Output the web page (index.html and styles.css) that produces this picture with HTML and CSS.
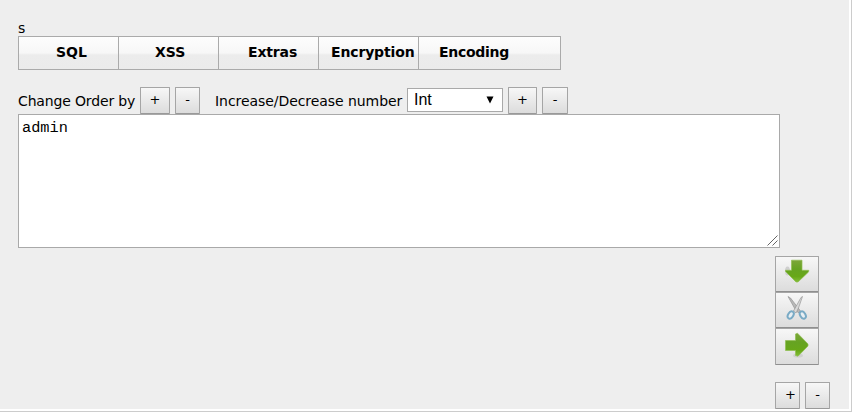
FILE: index.html
```html
<!DOCTYPE html>
<html lang="en">
<head>
<meta charset="utf-8">
<title>SQL tools</title>
<link rel="stylesheet" href="styles.css">
</head>
<body>
<main class="panel">
  <div class="caption">s</div>
  <nav class="menu">
    <a class="item sql"><span>SQL</span></a>
    <a class="item xss"><span>XSS</span></a>
    <a class="item extras"><span>Extras</span></a>
    <a class="item encryption"><span>Encryption</span></a>
    <a class="item encoding"><span>Encoding</span></a>
  </nav>
  <div class="controls">
    <span class="label order">Change Order by</span>
    <button class="btn wide">+</button>
    <button class="btn minus">-</button>
    <span class="label number">Increase/Decrease number</span>
    <div class="select"><span>Int</span><svg width="8" height="8" viewBox="0 0 8 8"><path d="M0.5 0.5H7.5L4 7.5Z"/></svg></div>
    <button class="btn plus">+</button>
    <button class="btn last">-</button>
  </div>
  <div class="editor">
    <span class="value">admin</span>
    <svg class="grip" width="11" height="11" viewBox="0 0 11 11"><path d="M0.5 10.5L10.5 0.5M5.5 10.5L10.5 5.5"/></svg>
  </div>
  <div class="actions">
    <button class="action">
      <svg width="26" height="26" viewBox="0 0 26 26">
        <defs><linearGradient id="green" x1="0" y1="0" x2="0" y2="1"><stop offset="0" stop-color="#7da63a"/><stop offset=".4" stop-color="#66a322"/><stop offset=".75" stop-color="#68a818"/><stop offset="1" stop-color="#83bd38"/></linearGradient></defs>
        <ellipse cx="3.5" cy="12" rx="2.5" ry="4.5" fill="#cfcfcf"/>
        <path d="M7.5 1.2H18V11.3L24.8 11.3L24.5 13L14 23H12L1.5 12.5V11.3H7.5Z" fill="url(#green)" stroke="#8fbf52" stroke-width=".7"/>
      </svg>
    </button>
    <button class="action">
      <svg width="26" height="26" viewBox="0 0 26 26">
        <path d="M4 1.5L6.5 3L16.5 16L14.5 18L11 14Z" fill="#b8b8b8" stroke="#8c8c8c" stroke-width=".6"/>
        <path d="M18.5 1.5L17 2.5L9.5 16L12 18L14.5 13Z" fill="#d8d8d8" stroke="#8c8c8c" stroke-width=".6"/>
        <ellipse cx="6.7" cy="20" rx="2.6" ry="4" transform="rotate(30 6.7 20)" fill="#e8eef2" stroke="#79aac5" stroke-width="2"/>
        <ellipse cx="18.8" cy="20" rx="2.6" ry="4" transform="rotate(-30 18.8 20)" fill="#e8eef2" stroke="#79aac5" stroke-width="2"/>
      </svg>
    </button>
    <button class="action">
      <svg width="26" height="26" viewBox="0 0 26 26">
        <ellipse cx="14" cy="23.5" rx="5" ry="2" fill="#d0d0d0"/>
        <path d="M1.5 8.5H11.5V2L13.5 1.2L24 12V14L14 24.2L11.5 23.5V18.5H1.5Z" fill="url(#green)" stroke="#8fbf52" stroke-width=".7"/>
      </svg>
    </button>
  </div>
  <div class="pager">
    <button class="btn small-plus">+</button>
    <button class="btn small-minus">-</button>
  </div>
</main>
</body>
</html>
```
FILE: styles.css
```css
* { box-sizing: border-box; }
body {
  margin: 0;
  width: 852px;
  height: 412px;
  overflow: hidden;
  background: #fff;
  border-right: 1px solid #ccc;
  border-bottom: 1px solid #ccc;
  font-family: "DejaVu Sans", Verdana, sans-serif;
  font-size: 14px;
  color: #000;
}
.panel {
  width: 849px;
  height: 409px;
  padding: 20px 0 0 18px;
  background: #eee;
}
.caption { height: 16px; line-height: 16px; }
.menu {
  display: flex;
  width: 543px;
  height: 34px;
  border: 1px solid #aaa;
  background: linear-gradient(#fdfdfd 0%, #f7f7f7 50%, #ececec 56%, #ebebeb 100%);
}
.item {
  flex: none;
  width: 100px;
  border-right: 1px solid #aaa;
  line-height: 30px;
  font-weight: bold;
  white-space: nowrap;
}
.sql { padding-left: 37px; }
.xss { padding-left: 36px; }
.extras { padding-left: 29px; letter-spacing: -0.15px; }
.encryption { padding-left: 12px; letter-spacing: -0.15px; }
.encoding { width: 141px; padding-left: 20px; border-right: 0; letter-spacing: -0.3px; }
.controls {
  display: flex;
  height: 27px;
  margin-top: 17px;
}
.label {
  flex: none;
  line-height: 28px;
  white-space: nowrap;
}
.order { width: 122px; letter-spacing: -0.15px; }
.number { width: 192px; margin-left: 15px; letter-spacing: -0.06px; }
.btn {
  flex: none;
  height: 27px;
  padding: 0 0 2px;
  border: 1px solid #a5a5a5;
  border-bottom-color: #999;
  border-radius: 1px;
  background: linear-gradient(#f7f7f7, #dcdcdc);
  font: 13px "DejaVu Sans", Verdana, sans-serif;
  color: #000;
}
.wide { width: 30px; }
.minus { width: 25px; margin-left: 5px; }
.select {
  display: flex;
  flex: none;
  align-items: center;
  justify-content: space-between;
  width: 96px;
  height: 24px;
  margin-top: 1px;
  padding: 0 8px 0 6px;
  border: 1px solid #a9a9a9;
  background: #fff;
  font: 16px "Liberation Sans", Arial, sans-serif;
}
.plus { width: 29px; margin-left: 5px; }
.last { width: 26px; margin-left: 5px; }
.editor {
  position: relative;
  width: 762px;
  height: 134px;
  padding: 4px 3px;
  border: 1px solid #a9a9a9;
  background: #fff;
  font: 15.3px/18px "Liberation Mono", monospace;
}
.value { display: block; }
.grip { position: absolute; right: 1px; bottom: 1px; fill: none; stroke: #555; stroke-width: 0.9; }
.actions {
  display: flex;
  flex-direction: column;
  width: 44px;
  margin: 8px 0 0 757px;
}
.action {
  height: 36px;
  padding: 0 0 4px;
  border: 1px solid #a5a5a5;
  border-bottom-color: #8f8f8f;
  border-radius: 1px;
  background: linear-gradient(#f7f7f7, #dcdcdc);
}
.action:last-child { height: 37px; }
.action svg { display: block; margin: auto; }
.pager {
  display: flex;
  gap: 5px;
  margin: 17px 0 0 757px;
}
.small-plus { width: 25px; padding: 0 0 3px 6px; }
.small-minus { width: 25px; }
```
